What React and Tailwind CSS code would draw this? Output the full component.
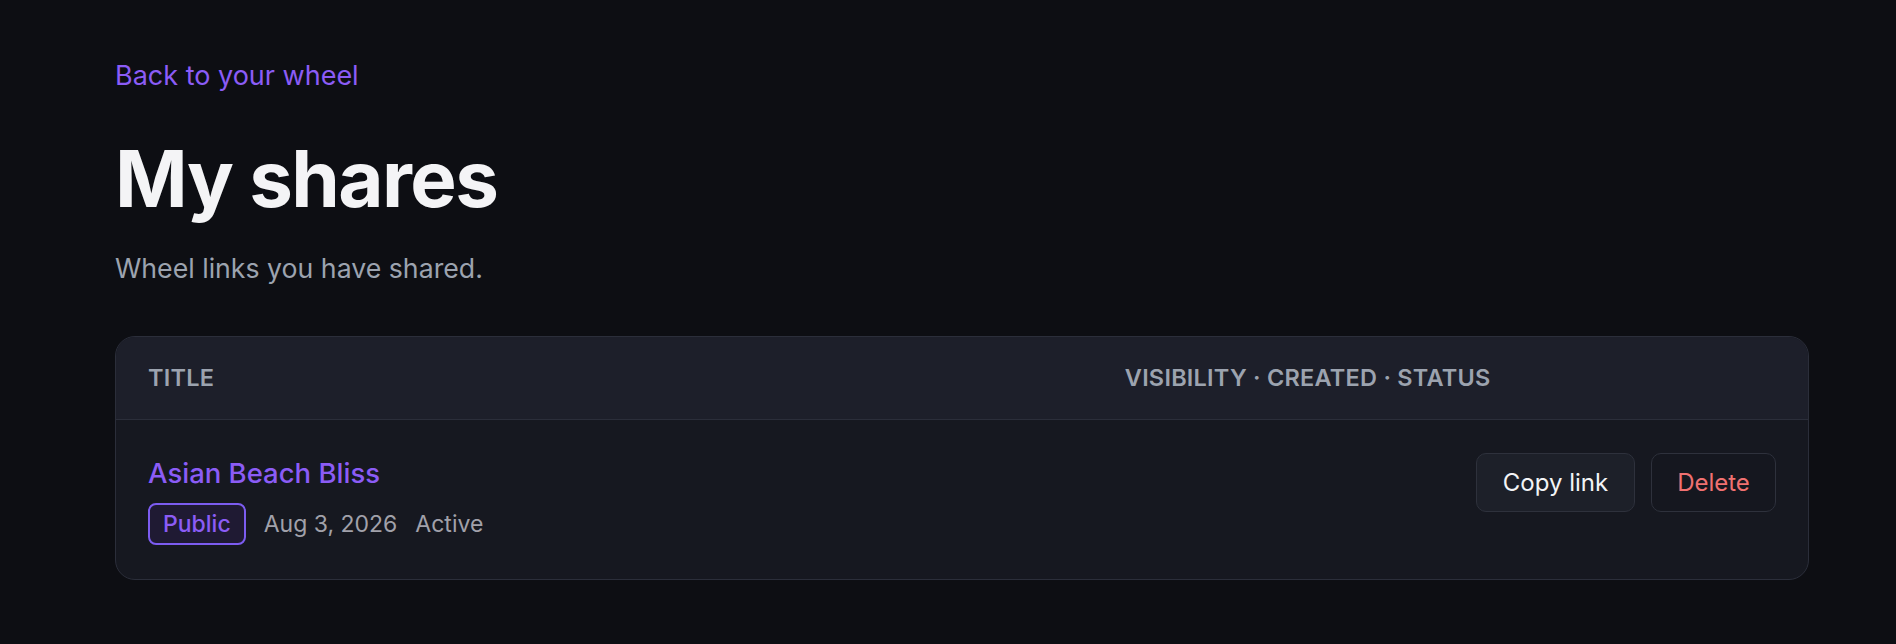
import React from 'react';

const shares = [
  { id: 1, title: 'Asian Beach Bliss', visibility: 'Public', created: 'Aug 3, 2026', status: 'Active' }
];

const App = () => {
  return (
    <div className="min-h-screen bg-[#0d0e13] text-[#f4f4f6] font-['Inter','Liberation_Sans',sans-serif]">
      <main className="ml-[115px] w-[1694px] pt-[56px] pb-10">
        {/* Back link */}
        <a href="#" className="block text-[27px] leading-[40px] text-[#8b5cf6] w-fit">
          Back to your wheel
        </a>

        {/* Heading */}
        <h1 className="mt-[44px] text-[78px] leading-[78px] font-bold tracking-[-0.02em] text-[#f4f4f6]">
          My shares
        </h1>
        <p className="mt-[30px] text-[26.7px] leading-[40px] text-[#9ca3af]">Wheel links you have shared.</p>

        {/* Shares table */}
        <div className="mt-[48px] rounded-[20px] border border-[#2b2e3a] bg-[#161820] overflow-hidden">
          <div className="grid grid-cols-[3fr_2fr] items-center h-[83px] px-[32px] bg-[#1d1f2a] border-b border-[#2b2e3a]">
            <span className="text-[23.5px] font-semibold uppercase tracking-[0.01em] text-[#9ca3af]">Title</span>
            <span className="text-[23.5px] font-semibold uppercase tracking-[0.01em] text-[#9ca3af]">
              Visibility · Created · Status
            </span>
          </div>

          {shares.map((share) => (
            <div key={share.id} className="flex justify-between items-start px-[32px] pt-[35px] pb-[34px]">
              <div>
                <a href="#" className="block text-[27.5px] leading-[36px] font-medium text-[#8b5cf6]">
                  {share.title}
                </a>
                <div className="mt-[12px] flex items-center gap-[18px] text-[23px] text-[#a1a1aa]">
                  <span className="h-[42px] px-[13px] flex items-center rounded-[8px] border-2 border-[#7c5cf0] bg-[#1f1a33] font-medium text-[#8b5cf6]">
                    {share.visibility}
                  </span>
                  <span>{share.created}</span>
                  <span>{share.status}</span>
                </div>
              </div>
              <div className="flex gap-[16px] mt-[-2px]">
                <button className="h-[59px] w-[159px] rounded-[10px] border border-[#2e313c] bg-[#1d2029] text-[24px] text-[#f3f4f6]">
                  Copy link
                </button>
                <button className="h-[59px] w-[125px] rounded-[10px] border border-[#2e313c] bg-[#15171f] text-[24px] text-[#f07171]">
                  Delete
                </button>
              </div>
            </div>
          ))}
        </div>
      </main>
    </div>
  );
};

export default App;
